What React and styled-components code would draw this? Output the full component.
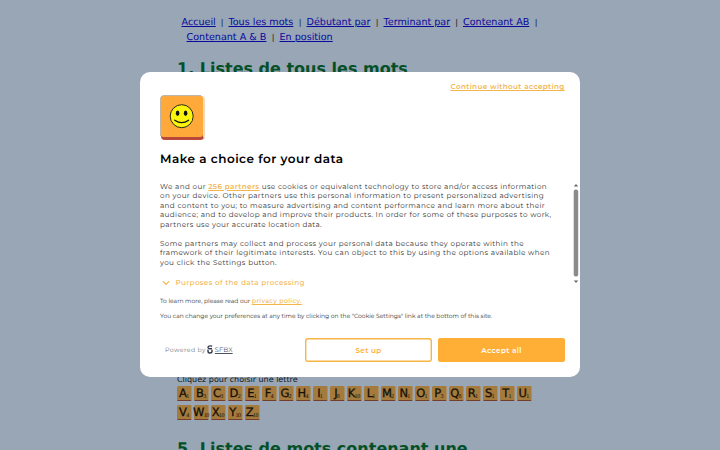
// general imports
import React from 'react';
import styled, { createGlobalStyle } from 'styled-components';

const GlobalStyle = createGlobalStyle`
  * {
    box-sizing: border-box;
  }
  body {
    margin: 0;
    overflow: hidden;
    background: #99a6b6;
    text-rendering: geometricPrecision;
  }
`;

const orange = '#ffae36';
const amber = '#f3b64c';

// page behind the dialog
const Page = styled.div`
  position: relative;
  width: 720px;
  height: 450px;
  overflow: hidden;
  padding: 15px 177px 0;
  font-family: 'DejaVu Sans', sans-serif;
  font-size: 9.6px;
  color: #111820;
`;
const Nav = styled.nav`
  height: 44px;
`;
const NavRow = styled.div`
  display: flex;
  height: 15px;
  line-height: 16px;
  padding-left: ${({ $indent }) => $indent}px;
`;
const NavLink = styled.a`
  width: ${({ $width }) => $width}px;
  white-space: nowrap;
  color: #0a0a9c;
  text-decoration: underline;
`;
const Pipe = styled.span`
  width: 13px;
  text-align: center;
  font-size: 8px;
`;
const H2Style = styled.h2`
  height: 20px;
  margin: 0;
  white-space: nowrap;
  line-height: 20px;
  font-size: 16px;
  color: #045027;
`;
const Section = styled.section`
  margin-top: 294px;
`;
const PickText = styled.p`
  height: 13px;
  margin: 0;
  line-height: 13px;
  font-size: 8px;
`;
const Tiles = styled.div`
  display: flex;
  flex-wrap: wrap;
  width: 360px;
  gap: 4px 2.1px;
  margin-bottom: 19px;
`;
const Tile = styled.div`
  display: flex;
  align-items: flex-end;
  justify-content: center;
  width: 14.9px;
  height: 15px;
  border-radius: 1.5px;
  border-right: 1px solid #a88f68;
  border-bottom: 1px solid #743d2c;
  background: #a57b3d;
  font: 11.5px/14px 'DejaVu Sans', sans-serif;
  color: #151008;
  -webkit-text-stroke: 0.3px #151008;
`;
const Points = styled.sub`
  margin-left: -0.8px;
  font: 6px/6px 'Liberation Serif', serif;
  letter-spacing: -0.4px;
  -webkit-text-stroke: 0;
`;

// dialog
const Dialog = styled.div`
  position: absolute;
  top: 72.4px;
  left: 140px;
  width: 440px;
  height: 305px;
  padding: 0 15px 0 20px;
  border-radius: 10px;
  background: #fff;
  font-family: Montserrat, Inter, sans-serif;
  color: #2b2b2b;
`;
const Continue = styled.a`
  display: block;
  width: 114.5px;
  height: 22.5px;
  margin-left: auto;
  padding-top: 9px;
  line-height: 12px;
  font-size: 7.2px;
  font-weight: 600;
  letter-spacing: 0.38px;
  white-space: nowrap;
  color: ${amber};
  text-decoration: underline;
`;
const Logo = styled.svg`
  display: block;
  width: 46px;
  height: 46px;
`;
const Title = styled.h1`
  height: 24px;
  margin: 7.3px 0 9.7px;
  line-height: 24px;
  font-size: 12px;
  font-weight: 600;
  letter-spacing: 0.48px;
  color: #000;
`;
const Scroller = styled.div`
  display: flex;
  justify-content: space-between;
  height: 101px;
  margin-right: -15px;
`;
const Copy = styled.div`
  width: 395px;
`;
const Paragraph = styled.p`
  margin: 0 0 9.5px;
`;
const Line = styled.span`
  display: block;
  width: ${({ $width }) => $width}px;
  height: 9.5px;
  line-height: 9.5px;
  font-size: 7.2px;
  letter-spacing: 0.38px;
  white-space: nowrap;
  text-align-last: justify;
`;
const Link = styled.a`
  color: ${amber};
  font-weight: ${({ $bold }) => ($bold ? 600 : 500)};
  text-decoration: underline;
`;
const Purposes = styled.div`
  display: flex;
  align-items: center;
  gap: 6px;
  height: 12px;
  margin-top: 6.4px;
  padding-left: 1.5px;
  font-size: 7.2px;
  font-weight: 500;
  letter-spacing: 0.39px;
  white-space: nowrap;
  color: ${amber};
`;
const Scrollbar = styled.svg`
  width: 9px;
  height: 101px;
`;
const Notes = styled.div`
  padding-top: 13px;
`;
const Note = styled.p`
  height: 10px;
  margin: 0 0 5px;
  line-height: 10px;
  font-size: 6px;
  white-space: nowrap;
  color: #333;

  ${Link} {
    font-size: 6.4px;
    letter-spacing: 0.32px;
  }
`;
const Footer = styled.div`
  display: flex;
  align-items: center;
  height: 24px;
  margin-top: 17.6px;
  padding-left: 5px;
`;
const Powered = styled.div`
  display: flex;
  align-items: center;
  width: 140px;
  font-size: 6.2px;
  letter-spacing: 0.42px;
  color: #737780;
`;
const BrandIcon = styled.svg`
  width: 6px;
  height: 9px;
  margin: 0 1.5px 1px;
`;
const Brand = styled.a`
  font-size: 6.5px;
  letter-spacing: 0.15px;
  color: #4a5064;
  text-decoration: underline;
`;
const Button = styled.button`
  width: 127px;
  height: 24px;
  margin-right: 6px;
  padding: 0;
  border: 0;
  border-radius: 3px;
  box-shadow: inset 0 0 0 1.4px ${({ $filled }) => ($filled ? orange : '#f6b544')};
  background: ${({ $filled }) => ($filled ? orange : '#fff')};
  font: 600 7.2px Montserrat, Inter, sans-serif;
  letter-spacing: 0.4px;
  color: ${({ $filled }) => ($filled ? '#fff' : orange)};
  &:last-child {
    margin-right: 0;
  }
`;

const navRows = [
  {
    indent: 4.5,
    links: [['Accueil', 34], ['Tous les mots', 65], ['Débutant par', 64], ['Terminant par', 66.5], ['Contenant AB', 66.5]],
  },
  { indent: 9.5, links: [['Contenant A & B', 80], ['En position', 53]], last: true },
];

const points = {
  A: 1, B: 3, C: 3, D: 2, E: 1, F: 4, G: 2, H: 4, I: 1, J: 8, K: 10, L: 1, M: 2,
  N: 1, O: 1, P: 3, Q: 8, R: 1, S: 1, T: 1, U: 1, V: 4, W: 10, X: 10, Y: 10, Z: 10,
};

function SmileyTile() {
  return (
    <Logo viewBox="0 0 46 46">
      <rect x="1" y="1" width="44" height="44" rx="3.5" fill="#f9dfc0" />
      <path d="M1 38h43v3q0 4-4 4H5q-4 0-4-4z" fill="#b9473a" />
      <path d="M43 3l2 2v35l-2 3z" fill="#f7d9b5" />
      <rect x="0.5" y="0.5" width="42.5" height="41.5" rx="3" fill="#ffa93b" />
      <path d="M.6 41V4Q.6.6 4 .6h37" fill="none" stroke="#b9b3a8" strokeWidth="1" />
      <circle cx="21.7" cy="21.2" r="11.5" fill="#fbf50d" stroke="#292714" strokeWidth="1" />
      <ellipse cx="17.6" cy="18.2" rx="1.8" ry="2.8" fill="#111" />
      <ellipse cx="25.6" cy="18.2" rx="1.8" ry="2.8" fill="#111" />
      <path d="M14.8 25.2q6.9 5 13.8 0" fill="none" stroke="#111" strokeWidth="1.3" strokeLinecap="round" />
    </Logo>
  );
}

// export main component
export default function App() {
  return (
    <React.Fragment>
      <GlobalStyle />
      <Page>
        <Nav>
          {navRows.map((row) => (
            <NavRow key={row.indent} $indent={row.indent}>
              {row.links.map(([label, width], i) => (
                <React.Fragment key={label}>
                  <NavLink $width={width}>{label}</NavLink>
                  {!(row.last && i === row.links.length - 1) && <Pipe>|</Pipe>}
                </React.Fragment>
              ))}
            </NavRow>
          ))}
        </Nav>
        <H2Style>1. Listes de tous les mots</H2Style>
        <Section>
          <PickText>Cliquez pour choisir une lettre</PickText>
          <Tiles>
            {Object.entries(points).map(([letter, value]) => (
              <Tile key={letter}>
                {letter}
                <Points>{value}</Points>
              </Tile>
            ))}
          </Tiles>
          <H2Style>5. Listes de mots contenant une</H2Style>
        </Section>

        <Dialog>
          <Continue>Continue without accepting</Continue>
          <SmileyTile />
          <Title>Make a choice for your data</Title>
          <Scroller>
            <Copy>
              <Paragraph>
                <Line $width={387}>We and our <Link $bold>256 partners</Link> use cookies or equivalent technology to store and/or access information</Line>
                <Line $width={384}>on your device. Other partners use this personal information to present personalized advertising</Line>
                <Line $width={385}>and content to you; to measure advertising and content performance and learn more about their</Line>
                <Line $width={391.5}>audience; and to develop and improve their products. In order for some of these purposes to work,</Line>
                <Line $width={162}>partners use your accurate location data.</Line>
              </Paragraph>
              <Paragraph>
                <Line $width={364}>Some partners may collect and process your personal data because they operate within the</Line>
                <Line $width={390}>framework of their legitimate interests. You can object to this by using the options available when</Line>
                <Line $width={117}>you click the Settings button.</Line>
              </Paragraph>
              <Purposes>
                <svg width="8" height="6" viewBox="0 0 8 6">
                  <path d="M.8 1.2l3.2 3.3 3.2-3.3" fill="none" stroke="currentColor" strokeWidth="1.1" />
                </svg>
                Purposes of the data processing
              </Purposes>
            </Copy>
            <Scrollbar viewBox="0 0 9 101">
              <path d="M2.8 4.5l2.2-2.5 2.2 2.5z" fill="#666" />
              <rect x="2.7" y="7.5" width="4.5" height="87" rx="2" fill="#8b8b8b" />
              <path d="M2.8 98.5l2.2 2.5 2.2-2.5z" fill="#666" />
            </Scrollbar>
          </Scroller>
          <Notes>
            <Note>To learn more, please read our <Link>privacy policy.</Link></Note>
            <Note>You can change your preferences at any time by clicking on the "Cookie Settings" link at the bottom of this site.</Note>
          </Notes>
          <Footer>
            <Powered>
              Powered by
              <BrandIcon viewBox="0 0 6 9">
                <path d="M5.2 1.2Q1 .3 1 2.3t4 1.2" fill="none" stroke="#30384e" strokeWidth="1.3" />
                <path d="M1 4.6v1.6Q1 8 3 8t2-1.8V4.8" fill="none" stroke="#30384e" strokeWidth="1.4" />
              </BrandIcon>
              <Brand>SFBX</Brand>
            </Powered>
            <Button>Set up</Button>
            <Button $filled>Accept all</Button>
          </Footer>
        </Dialog>
      </Page>
    </React.Fragment>
  );
}
